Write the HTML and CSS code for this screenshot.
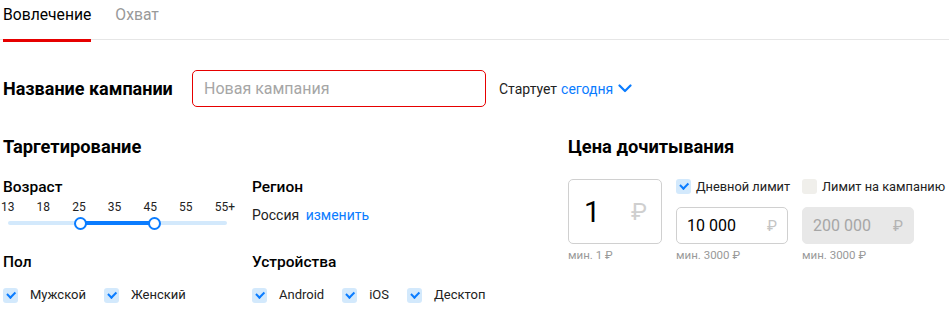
FILE: index.html
```html
<!DOCTYPE html>
<html lang="ru">

<head>
    <meta charset="UTF-8">
    <meta name="viewport" content="width=device-width, initial-scale=1.0">
    <title>Новая кампания</title>
    <link rel="stylesheet" href="styles.css">
</head>

<body>
    <div class="tabs">
        <div class="tab active">Вовлечение</div>
        <div class="tab">Охват</div>
    </div>

    <div class="name-row">
        <div class="name-label">Название кампании</div>
        <input class="name-input" type="text" placeholder="Новая кампания">
        <div class="start">Стартует <span class="link">сегодня</span>
            <svg class="chevron" width="14" height="9" viewBox="0 0 14 9">
                <path d="M1.5 1.5 L7 7 L12.5 1.5" fill="none" stroke="#0a7cff" stroke-width="2.2" stroke-linecap="round" stroke-linejoin="round" />
            </svg>
        </div>
    </div>

    <div class="sections">
        <div class="targeting">
            <h2>Таргетирование</h2>
            <div class="grid">
                <div class="cell">
                    <h3>Возраст</h3>
                    <div class="slider">
                        <div class="ticks">
                            <span>13</span><span>18</span><span>25</span><span>35</span><span>45</span><span>55</span><span>55+</span>
                        </div>
                        <div class="track">
                            <div class="fill" style="left: 33.33%; width: 33.33%;"></div>
                            <div class="handle" style="left: 33.33%;"></div>
                            <div class="handle" style="left: 66.67%;"></div>
                        </div>
                    </div>
                </div>
                <div class="cell">
                    <h3>Регион</h3>
                    <div class="region">Россия <span class="link">изменить</span></div>
                </div>
                <div class="cell">
                    <h3>Пол</h3>
                    <div class="checks">
                        <label class="check"><span class="box on"></span>Мужской</label>
                        <label class="check"><span class="box on"></span>Женский</label>
                    </div>
                </div>
                <div class="cell">
                    <h3>Устройства</h3>
                    <div class="checks">
                        <label class="check"><span class="box on"></span>Android</label>
                        <label class="check"><span class="box on"></span>iOS</label>
                        <label class="check"><span class="box on"></span>Десктоп</label>
                    </div>
                </div>
            </div>
        </div>

        <div class="price">
            <h2>Цена дочитывания</h2>
            <div class="price-row">
                <div class="price-col">
                    <div class="big-field"><span>1</span><span class="rub">₽</span></div>
                    <div class="hint">мин. 1 ₽</div>
                </div>
                <div class="price-col limit">
                    <label class="check small"><span class="box on"></span>Дневной лимит</label>
                    <div class="field"><span>10 000</span><span class="rub">₽</span></div>
                    <div class="hint">мин. 3000 ₽</div>
                </div>
                <div class="price-col limit">
                    <label class="check small"><span class="box off"></span>Лимит на кампанию</label>
                    <div class="field disabled"><span>200 000</span><span class="rub">₽</span></div>
                    <div class="hint">мин. 3000 ₽</div>
                </div>
            </div>
        </div>
    </div>
</body>

</html>
```

FILE: styles.css
```css
* {
    margin: 0;
    padding: 0;
    box-sizing: border-box;
}

body {
    font-family: Roboto, "Liberation Sans", sans-serif;
    color: #000;
    background: #fff;
}

.link {
    color: #0a7cff;
}

.tabs {
    display: flex;
    gap: 24px;
    height: 40px;
    padding-left: 3px;
    border-bottom: 1px solid #e6e6e6;
}

.tab {
    height: 42px;
    padding-top: 5px;
    font-size: 15.7px;
    line-height: 20px;
    color: #999;
}

.tab.active {
    color: #000;
    border-bottom: 3px solid #e60000;
}

.name-row {
    display: flex;
    align-items: center;
    margin-top: 30px;
    padding-left: 3px;
}

.name-label {
    width: 189px;
    font-size: 18px;
    font-weight: 700;
}

.name-input {
    width: 294px;
    height: 37px;
    border: 1px solid #e60000;
    border-radius: 5px;
    padding: 0 11px;
    font-family: inherit;
    font-size: 16px;
    outline: none;
}

.name-input::placeholder {
    color: #a6a6a6;
}

.start {
    display: flex;
    align-items: center;
    margin-left: 13px;
    font-size: 14px;
    color: #222;
}

.start .link {
    margin-left: 4px;
}

.chevron {
    margin-left: 5px;
}

.sections {
    display: flex;
    margin-top: 30px;
}

h2 {
    font-size: 18.3px;
    font-weight: 700;
    line-height: 20px;
}

h3 {
    font-size: 15.5px;
    font-weight: 500;
    line-height: 20px;
}

.targeting {
    flex-shrink: 0;
    width: 565px;
    padding-left: 3px;
}

.grid {
    display: grid;
    grid-template-columns: 249px auto;
    row-gap: 20px;
    margin-top: 20px;
}

.slider {
    width: 234px;
    margin-top: 3px;
    margin-left: -2px;
}

.ticks {
    display: flex;
    justify-content: space-between;
    font-size: 12px;
    line-height: 14px;
    color: #222;
}

.track {
    position: relative;
    height: 4px;
    margin: 7px 8px 7px 7px;
    border-radius: 2px;
    background: #d3e9fc;
}

.fill {
    position: absolute;
    top: 0;
    height: 4px;
    background: #0a7cff;
}

.handle {
    position: absolute;
    top: -4.5px;
    width: 13px;
    height: 13px;
    margin-left: -6.5px;
    border: 2px solid #0a7cff;
    border-radius: 50%;
    background: #fff;
}

.region {
    margin-top: 8px;
    font-size: 14px;
    line-height: 20px;
    color: #222;
}

.region .link {
    margin-left: 3px;
}

.checks {
    display: flex;
    gap: 18px;
    margin-top: 13px;
}

.check {
    display: flex;
    align-items: center;
    gap: 12px;
    font-size: 13px;
    line-height: 20px;
    color: #222;
    white-space: nowrap;
}

.box {
    flex-shrink: 0;
    width: 15px;
    height: 15px;
    border-radius: 3px;
    background: #d3e9fc;
    position: relative;
}

.box.on::after {
    content: "";
    position: absolute;
    left: 4px;
    top: 3px;
    width: 6px;
    height: 3.5px;
    border-left: 2px solid #0a7cff;
    border-bottom: 2px solid #0a7cff;
    transform: rotate(-45deg);
}

.box.off {
    background: #f0efeb;
}

.check.small {
    gap: 5px;
    height: 15px;
    font-size: 12.8px;
}

.price {
    padding-left: 3px;
}

.price-row {
    display: flex;
    gap: 14px;
    margin-top: 22px;
}

.price-col {
    display: flex;
    flex-direction: column;
}

.price-col.limit {
    width: 112px;
}

.big-field {
    display: flex;
    align-items: center;
    justify-content: space-between;
    width: 94px;
    height: 65px;
    padding: 0 14px 0 15px;
    border: 1px solid #d0d0d0;
    border-radius: 5px;
    font-size: 29px;
}

.big-field .rub {
    font-size: 24px;
    color: #cfcfcf;
}

.field {
    display: flex;
    align-items: center;
    justify-content: space-between;
    width: 112px;
    height: 37px;
    margin-top: 13px;
    padding: 0 10px 0 10px;
    border: 1px solid #d0d0d0;
    border-radius: 5px;
    font-size: 16px;
}

.field .rub {
    color: #c4c4c4;
    font-size: 15px;
}

.field.disabled {
    border-color: #e8e8e8;
    background: #e8e8e8;
    color: #a6a6a6;
}

.field.disabled .rub {
    color: #b3b3b3;
}

.hint {
    margin-top: 4px;
    font-size: 11.5px;
    line-height: 14px;
    color: #999;
    white-space: nowrap;
}
```
